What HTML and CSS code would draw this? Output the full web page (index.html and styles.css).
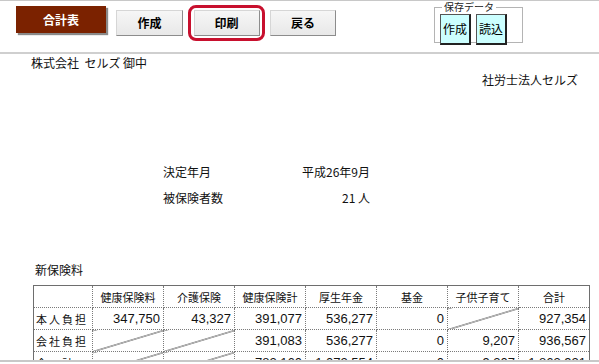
FILE: index.html
```html
<!DOCTYPE html>
<html lang="ja">
<head>
  <meta charset="UTF-8" />
  <meta name="viewport" content="width=device-width, initial-scale=1.0" />
  <title>合計表</title>
  <link rel="stylesheet" href="styles.css">
</head>
<body>
  <div id="toolbar">
    <button class="btn btn-main">合計表</button>
    <button class="btn btn-gray btn-make">作成</button>
    <div class="ring"><button class="btn btn-gray btn-print">印刷</button></div>
    <button class="btn btn-gray btn-back">戻る</button>
    <fieldset class="save">
      <legend>保存データ</legend>
      <button class="btn btn-cyan">作成</button>
      <button class="btn btn-cyan">読込</button>
    </fieldset>
  </div>

  <div id="sheet">
    <div class="to">株式会社&nbsp; セルズ 御中</div>
    <div class="from">社労士法人セルズ</div>

    <div class="info">
      <div class="info-row"><span>決定年月</span><span>平成26年9月</span></div>
      <div class="info-row"><span>被保険者数</span><span>21 人</span></div>
    </div>

    <div class="caption">新保険料</div>
    <table class="fees">
      <tr class="head">
        <td class="label"></td>
        <td>健康保険料</td>
        <td>介護保険</td>
        <td>健康保険計</td>
        <td>厚生年金</td>
        <td>基金</td>
        <td>子供子育て</td>
        <td>合計</td>
      </tr>
      <tr>
        <td class="label">本人負担</td>
        <td>347,750</td>
        <td>43,327</td>
        <td>391,077</td>
        <td>536,277</td>
        <td>0</td>
        <td class="slash"></td>
        <td>927,354</td>
      </tr>
      <tr>
        <td class="label">会社負担</td>
        <td class="slash"></td>
        <td class="slash"></td>
        <td>391,083</td>
        <td>536,277</td>
        <td>0</td>
        <td>9,207</td>
        <td>936,567</td>
      </tr>
      <tr>
        <td class="label">合　計</td>
        <td class="slash"></td>
        <td class="slash"></td>
        <td>782,160</td>
        <td>1,072,554</td>
        <td>0</td>
        <td>9,207</td>
        <td>1,863,921</td>
      </tr>
    </table>
  </div>
  <div id="bottomLine"></div>
</body>
</html>
```

FILE: styles.css
```css
body {
  margin: 0;
  padding: 0;
  background: #fff;
  font-family: "Liberation Sans", "Noto Sans CJK JP", sans-serif;
  font-size: 12px;
  color: #111;
  width: 599px;
  height: 364px;
  overflow: hidden;
}

#toolbar {
  display: flex;
  align-items: flex-start;
  height: 51px;
  border-top: 1px solid #c8c8c8;
  border-bottom: 2px solid #cfcfcf;
}

.btn {
  font-family: "Noto Sans CJK JP", sans-serif;
  font-size: 12px;
  font-weight: bold;
  padding: 0;
  cursor: pointer;
  line-height: 1;
}

.btn-main {
  margin: 5px 0 0 16px;
  width: 90px;
  height: 27px;
  background: #7b2200;
  color: #fff;
  border: none;
  box-shadow: 2px 2px 1px #8a8a8a;
}

.btn-gray {
  height: 26px;
  background: linear-gradient(#f6f6f6, #e8e8e8);
  color: #000;
  border: 1px solid #d6d6d6;
  border-right-color: #8c8c8c;
  border-bottom-color: #8c8c8c;
}

.btn-make {
  margin: 9px 0 0 10px;
  width: 67px;
}

.ring {
  margin: 4px 0 0 5px;
  width: 71px;
  height: 30px;
  border: 3px solid #c8102e;
  border-radius: 8px;
  display: flex;
  align-items: center;
  justify-content: center;
}

.btn-print {
  width: 66px;
}

.btn-back {
  margin: 9px 0 0 5px;
  width: 66px;
}

.save {
  margin: 1px 0 0 98px;
  padding: 2px 0 0 5px;
  width: 82px;
  height: 37px;
  border: 1px solid #b4b4b4;
  display: flex;
  gap: 5px;
  align-items: flex-start;
}

.save legend {
  font-family: "Noto Sans CJK JP", sans-serif;
  font-size: 10px;
  line-height: 10px;
  padding: 0 2px;
  margin-left: 2px;
  color: #222;
}

.btn-cyan {
  width: 31px;
  height: 31px;
  background: #ccffff;
  color: #000;
  font-weight: normal;
  border: 1px solid #555;
  border-right: 2px solid #222;
  border-bottom: 2px solid #222;
}

#sheet {
  height: 306px;
  overflow: hidden;
}

.to {
  margin: 2px 0 0 31px;
  line-height: 14px;
  font-family: "Noto Sans CJK JP", sans-serif;
}

.from {
  margin: 3px 21px 0 0;
  text-align: right;
  line-height: 14px;
  font-family: "Noto Sans CJK JP", sans-serif;
}

.info {
  margin: 78px 0 0 163px;
  width: 207px;
  font-family: "Noto Sans CJK JP", sans-serif;
}

.info-row {
  display: flex;
  justify-content: space-between;
  line-height: 14px;
  margin-bottom: 12px;
}

.caption {
  margin: 58px 0 0 35px;
  line-height: 14px;
  font-family: "Noto Sans CJK JP", sans-serif;
}

.fees {
  margin: 8px 0 0 33px;
  border-collapse: collapse;
  border: 1px solid #6e6e6e;
  table-layout: fixed;
  width: 549px;
}

.fees td {
  width: 70px;
  height: 21px;
  padding: 0 3px 0 0;
  text-align: right;
  border: 1px dotted #7a7a7a;
  white-space: nowrap;
  overflow: hidden;
  font-size: 13px;
}

.fees tr:first-child td {
  border-top: 1px solid #6e6e6e;
}

.fees td:first-child {
  border-left: 1px solid #6e6e6e;
}

.fees td:last-child {
  border-right: 1px solid #6e6e6e;
}

.fees .head td {
  text-align: center;
  padding: 0;
  font-family: "Noto Sans CJK JP", sans-serif;
  font-size: 11px;
}

.fees td.label {
  width: 56px;
  text-align: left;
  padding: 0 0 0 2px;
  letter-spacing: 2px;
  font-family: "Noto Sans CJK JP", sans-serif;
  font-size: 11px;
}

.fees td.slash {
  background: linear-gradient(to bottom right, transparent calc(50% - 0.7px), #222 50%, transparent calc(50% + 0.7px));
}

#bottomLine {
  height: 2px;
  background: #c8c8c8;
}
```
